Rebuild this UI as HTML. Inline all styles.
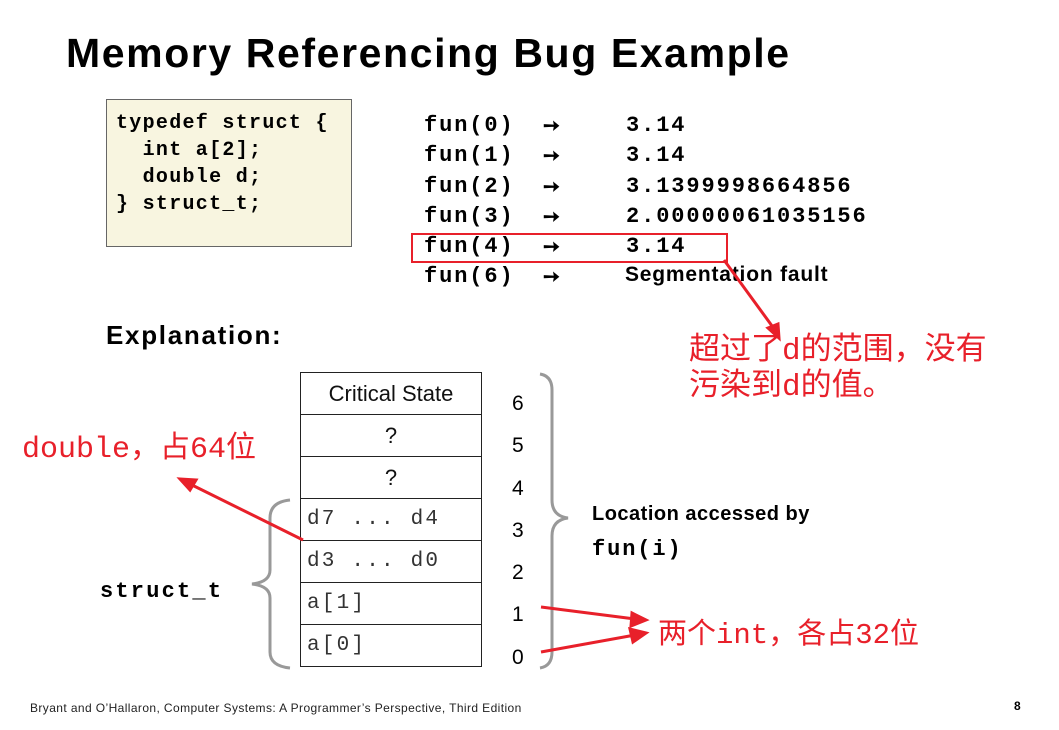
<!DOCTYPE html>
<html><head><meta charset="utf-8"><style>
body{margin:0;width:1059px;height:730px;background:#fff;position:relative;overflow:hidden;font-family:"Liberation Sans",sans-serif}
.a{position:absolute;white-space:nowrap}
.m{font-family:"Liberation Mono",monospace;font-weight:bold;font-size:22px;letter-spacing:1.9px}
.cn{font-family:"Liberation Mono","Noto Sans CJK SC",sans-serif;color:#e8202a;font-size:30px}
table{position:absolute;left:300px;top:372px;border-collapse:collapse}
td{border:1.5px solid #222;width:180px;height:41px;padding:0;font-size:22px;color:#111}
td.c{text-align:center}
td.l{font-family:"Liberation Mono",monospace;padding-left:6px;width:174px;font-size:21px;color:#333;letter-spacing:2.2px}
</style></head><body>
<div class="a" style="left:66px;top:30px;font-size:41px;font-weight:bold;letter-spacing:1.6px">Memory Referencing Bug Example</div>
<div class="a" style="left:106px;top:99px;width:244px;height:146px;background:#f8f5e0;border:1.5px solid #666"></div>
<div class="a m" style="left:116px;top:110px;line-height:27px;font-size:20px;letter-spacing:1.3px">typedef struct {<br>&nbsp;&nbsp;int a[2];<br>&nbsp;&nbsp;double d;<br>} struct_t;</div>
<div class="a m" style="left:424px;top:111px;line-height:30.3px">fun(0)<br>fun(1)<br>fun(2)<br>fun(3)<br>fun(4)<br>fun(6)</div>
<div class="a" style="left:543px;top:111px;line-height:30.3px;font-size:20px;font-weight:bold">➙<br>➙<br>➙<br>➙<br>➙<br>➙</div>
<div class="a m" style="left:626px;top:111px;line-height:30.3px">3.14<br>3.14<br>3.1399998664856<br>2.00000061035156<br>3.14</div>
<div class="a" style="left:625px;top:263px;font-size:21px;font-weight:bold;letter-spacing:0.8px">Segmentation fault</div>
<div class="a" style="left:411px;top:233px;width:313px;height:26px;border:2.5px solid #e8202a"></div>
<div class="a" style="left:106px;top:320px;font-size:26px;font-weight:bold;letter-spacing:1.7px">Explanation:</div>
<div class="a cn" style="left:689px;top:334px;line-height:36px;font-size:31px">超过了d的范围，没有<br>污染到d的值。</div>
<div class="a cn" style="left:22px;top:422px">double，占64位</div>
<div class="a cn" style="left:658px;top:610px;font-size:29px">两个int，各占32位</div>
<table>
<tr><td class="c">Critical State</td></tr>
<tr><td class="c">?</td></tr>
<tr><td class="c">?</td></tr>
<tr><td class="l">d7 ... d4</td></tr>
<tr><td class="l">d3 ... d0</td></tr>
<tr><td class="l">a[1]</td></tr>
<tr><td class="l">a[0]</td></tr>
</table>
<div class="a" style="left:512px;top:383px;line-height:42.3px;font-size:21px">6<br>5<br>4<br>3<br>2<br>1<br>0</div>
<div class="a" style="left:592px;top:503px;font-size:20px;font-weight:bold;letter-spacing:0.5px">Location accessed by</div>
<div class="a m" style="left:592px;top:537px">fun(i)</div>
<div class="a m" style="left:100px;top:579px;letter-spacing:2.2px">struct_t</div>
<svg class="a" style="left:0;top:0" width="1059" height="730">
<g fill="none" stroke="#999" stroke-width="3">
<path d="M540 374 Q552 376 552 390 L552 500 Q552 516 568 518 Q552 520 552 536 L552 652 Q552 666 540 668"/>
<path d="M290 500 Q270 502 270 518 L270 570 Q270 582 252 584 Q270 586 270 598 L270 652 Q270 666 290 668"/>
</g>
<g stroke="#e8202a" stroke-width="3" fill="#e8202a">
<line x1="724" y1="260" x2="775" y2="330"/><polygon points="779,338 768,328 778,324"/>
<line x1="303" y1="540" x2="190" y2="484"/><polygon points="180,479 196,480 190,490"/>
<line x1="541" y1="607" x2="635" y2="619"/><polygon points="646,620 632,613 631,626"/>
<line x1="541" y1="652" x2="635" y2="635"/><polygon points="646,633 630,629 633,642"/>
</g>
</svg>
<div class="a" style="left:30px;top:701px;font-size:12px;color:#222;letter-spacing:0.4px">Bryant and O’Hallaron, Computer Systems: A Programmer’s Perspective, Third Edition</div>
<div class="a" style="left:1014px;top:699px;font-size:12px;font-weight:bold">8</div>
</body></html>
